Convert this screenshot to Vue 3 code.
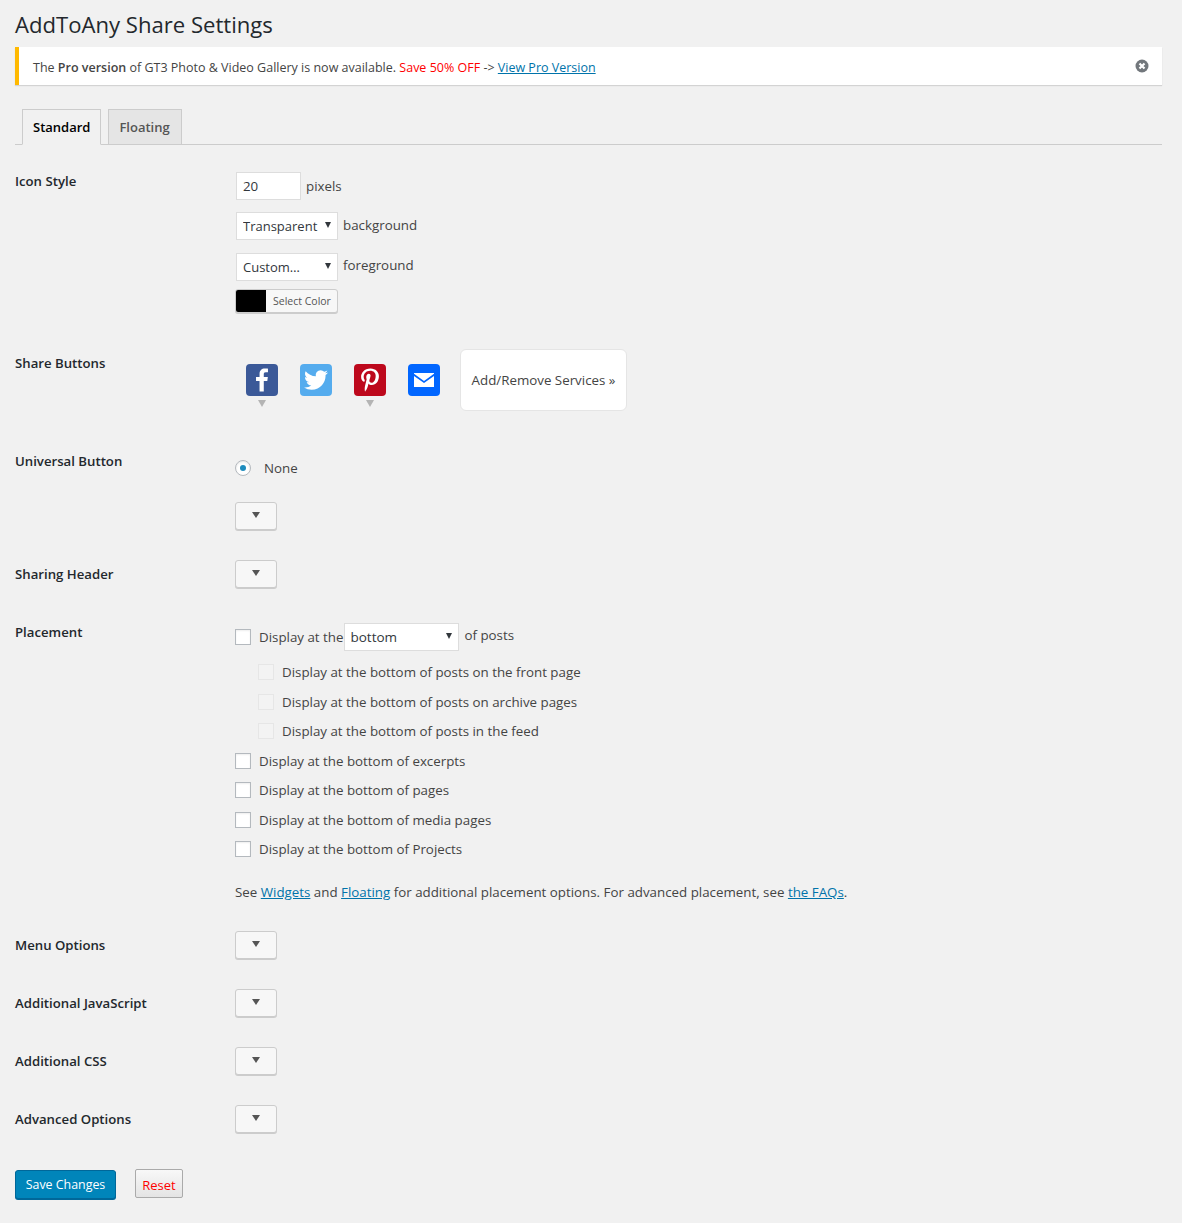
<script setup>
const sub = ['on the front page', 'on archive pages', 'in the feed']
const main = ['excerpts', 'pages', 'media pages', 'Projects']
const lower = ['Menu Options', 'Additional JavaScript', 'Additional CSS', 'Advanced Options']
</script>

<template>
  <div class="wrap">
    <h1 class="title">AddToAny Share Settings</h1>

    <div class="notice">
      <span>The <b>Pro version</b> of GT3 Photo &amp; Video Gallery is now available. <span class="red">Save 50% OFF</span> -&gt; <a href="#">View Pro Version</a></span>
      <svg class="dismiss" viewBox="0 0 14 14" width="14" height="14">
        <circle cx="7" cy="7" r="6.5" fill="#72777c" />
        <path d="M4.5 4.5l5 5M9.5 4.5l-5 5" stroke="#fff" stroke-width="2.2" />
      </svg>
    </div>

    <div class="tabs">
      <span class="tab active">Standard</span>
      <span class="tab floating">Floating</span>
    </div>

    <section class="row icon-style">
      <div class="label">Icon Style</div>
      <div class="field">
        <div class="line l-size"><input class="input" value="20" /><span>pixels</span></div>
        <div class="line l-bg">
          <span class="select s-small"><select><option>Transparent</option></select></span>
          <span class="raise">background</span>
        </div>
        <div class="line l-fg">
          <span class="select s-small"><select><option>Custom…</option></select></span>
          <span class="raise more-raise">foreground</span>
        </div>
        <div class="color">
          <span class="swatch"></span><span class="color-text">Select Color</span>
        </div>
      </div>
    </section>

    <section class="row share">
      <div class="label">Share Buttons</div>
      <div class="field share-field">
        <div class="svc">
          <svg viewBox="0 0 32 32" width="32" height="32"><rect width="32" height="32" rx="4" fill="#3b5998" /><path fill="#fff" d="M17.78 27.5V17.008h3.522l.527-4.09h-4.05v-2.61c0-1.182.33-1.99 2.023-1.99h2.166V4.66c-.375-.05-1.66-.16-3.155-.16-3.123 0-5.26 1.905-5.26 5.405v3.016h-3.53v4.09h3.53V27.5h4.223z" /></svg>
          <i class="caret"></i>
        </div>
        <div class="svc">
          <svg viewBox="0 0 32 32" width="32" height="32"><rect width="32" height="32" rx="4" fill="#55acee" /><path fill="#fff" d="M28 8.557a9.913 9.913 0 0 1-2.828.775 4.93 4.93 0 0 0 2.166-2.725 9.738 9.738 0 0 1-3.13 1.194 4.92 4.92 0 0 0-3.593-1.55 4.924 4.924 0 0 0-4.794 6.049c-4.09-.21-7.72-2.17-10.15-5.15a4.942 4.942 0 0 0-.665 2.477c0 1.71.87 3.214 2.19 4.1a4.968 4.968 0 0 1-2.23-.616v.06c0 2.39 1.7 4.38 3.952 4.83-.414.115-.85.174-1.297.174-.318 0-.626-.03-.928-.086a4.935 4.935 0 0 0 4.6 3.42 9.893 9.893 0 0 1-6.114 2.107c-.398 0-.79-.023-1.175-.068a13.953 13.953 0 0 0 7.55 2.213c9.056 0 14.01-7.507 14.01-14.013 0-.213-.005-.426-.015-.637.96-.695 1.795-1.56 2.455-2.55z" /></svg>
        </div>
        <div class="svc">
          <svg viewBox="0 0 32 32" width="32" height="32"><rect width="32" height="32" rx="4" fill="#bd081c" /><path fill="#fff" d="M16.539 4.5c-6.277 0-9.442 4.5-9.442 8.253 0 2.272.86 4.293 2.705 5.046.303.125.574.005.662-.33.061-.231.205-.816.27-1.06.088-.331.053-.447-.191-.736-.532-.627-.873-1.439-.873-2.591 0-3.338 2.498-6.327 6.505-6.327 3.548 0 5.497 2.168 5.497 5.062 0 3.81-1.686 7.025-4.188 7.025-1.382 0-2.416-1.142-2.085-2.545.397-1.674 1.166-3.48 1.166-4.689 0-1.081-.581-1.983-1.782-1.983-1.413 0-2.548 1.462-2.548 3.419 0 1.247.421 2.091.421 2.091l-1.699 7.199c-.505 2.137-.076 4.755-.039 5.019.021.158.223.196.314.077.13-.17 1.813-2.247 2.384-4.324.162-.587.929-3.631.929-3.631.46.876 1.801 1.646 3.227 1.646 4.247 0 7.128-3.871 7.128-9.053.003-3.918-3.317-7.568-8.361-7.568z" /></svg>
          <i class="caret"></i>
        </div>
        <div class="svc">
          <svg viewBox="0 0 32 32" width="32" height="32"><rect width="32" height="32" rx="4" fill="#0166ff" /><path fill="#fff" d="M6 9h20v.8L16 17 6 9.8zM6 12l10 7 10-7v11H6z" /></svg>
        </div>
        <div class="add">Add/Remove Services »</div>
      </div>
    </section>

    <section class="row universal">
      <div class="label">Universal Button</div>
      <div class="field">
        <div class="radio-line"><span class="radio"></span><span>None</span></div>
        <button class="more"><i></i></button>
      </div>
    </section>

    <section class="row header-row">
      <div class="label">Sharing Header</div>
      <div class="field"><button class="more"><i></i></button></div>
    </section>

    <section class="row placement">
      <div class="label">Placement</div>
      <div class="field">
        <div class="place-top">
          <span class="check"></span>
          <span class="at">Display at the</span>
          <span class="select s-wide"><select><option>bottom</option></select></span>
          <span class="raise of">of posts</span>
        </div>
        <div v-for="s in sub" :key="s" class="opt indent">
          <span class="check off"></span><span>Display at the bottom of posts {{ s }}</span>
        </div>
        <div v-for="m in main" :key="m" class="opt">
          <span class="check"></span><span>Display at the bottom of {{ m }}</span>
        </div>
        <p class="see">See <a href="#">Widgets</a> and <a href="#">Floating</a> for additional placement options. For advanced placement, see <a href="#">the FAQs</a>.</p>
      </div>
    </section>

    <section v-for="l in lower" :key="l" class="row lower">
      <div class="label">{{ l }}</div>
      <div class="field"><button class="more"><i></i></button></div>
    </section>

    <div class="actions">
      <button class="save">Save Changes</button>
      <button class="reset">Reset</button>
    </div>
  </div>
</template>

<style>
html, body { background: #f1f1f1; }
</style>

<style scoped>
.wrap {
  box-sizing: border-box;
  width: 1182px;
  height: 1223px;
  padding: 0 20px 0 15px;
  background: #f1f1f1;
  color: #444;
  font: 13.33px/20px "Open Sans", "Noto Sans", sans-serif;
  overflow: hidden;
}
a { color: #0073aa; text-decoration: underline; }
.title {
  margin: 0;
  padding-top: 9px;
  height: 47px;
  box-sizing: border-box;
  font-size: 22.1px;
  line-height: 30px;
  font-weight: 400;
  color: #23282d;
}
.notice {
  display: flex;
  justify-content: space-between;
  align-items: center;
  box-sizing: border-box;
  height: 38px;
  padding: 4px 13px 0 14px;
  background: #fff;
  border-left: 4px solid #ffb900;
  box-shadow: 0 1px 1px rgba(0, 0, 0, 0.12);
  color: #444;
  font-size: 12.5px;
}
.notice b { font-weight: 600; }
.red { color: #f00; }
.dismiss { margin-top: -4px; }
.tabs {
  display: flex;
  gap: 7px;
  box-sizing: border-box;
  height: 36px;
  margin-top: 24px;
  padding-left: 7px;
  border-bottom: 1px solid #ccc;
  font-size: 13px;
}
.tab {
  box-sizing: border-box;
  height: 36px;
  padding: 7px 10px;
  border: 1px solid #ccc;
  background: #e5e5e5;
  color: #555;
  font-weight: 600;
}
.tab.floating { width: 74px; }
.tab.active {
  background: #f1f1f1;
  border-bottom-color: #f1f1f1;
  color: #000;
}
.row {
  display: grid;
  grid-template-columns: 220px 1fr;
}
.label {
  color: #23282d;
  font-size: 13.2px;
  font-weight: 600;
}
.icon-style { margin-top: 26px; }
.icon-style .field { margin-top: 1px; }
.line { display: flex; align-items: flex-start; gap: 5px; }
.line span:not(.select) { line-height: 28px; }
.raise { margin-top: -1px; }
.more-raise { margin-top: -2px; }
.input {
  box-sizing: border-box;
  width: 65px;
  height: 28px;
  margin: 0 0 0 1px;
  padding: 0 6px;
  border: 1px solid #ddd;
  background: #fff;
  color: #32373c;
  font: inherit;
  outline: 0;
}
.l-bg { margin-top: 12px; }
.l-fg { margin-top: 13px; }
.select {
  position: relative;
  display: inline-block;
  box-sizing: border-box;
  height: 28px;
  border: 1px solid #ddd;
  background: #fff;
}
.select::after {
  content: "";
  position: absolute;
  right: 6px;
  top: 9px;
  border-style: solid;
  border-width: 6px 3.5px 0;
  border-color: #32373c transparent transparent;
}
.select select {
  appearance: none;
  display: block;
  width: 100%;
  height: 26px;
  padding: 0 6px;
  border: 0;
  background: transparent;
  color: #32373c;
  font: inherit;
  outline: 0;
}
.s-small { width: 102px; margin-left: 1px; font-size: 13px; }
.s-wide { width: 115px; font-size: 13.5px; }
.s-wide select { padding: 0 5px; }
.color {
  display: flex;
  box-sizing: border-box;
  width: 103px;
  height: 24px;
  margin-top: 8px;
  border: 1px solid #ccc;
  border-radius: 3px;
  box-shadow: 0 1px 0 #ccc;
  background: #f7f7f7;
  overflow: hidden;
}
.swatch { width: 30px; background: #000; }
.color-text {
  padding-left: 7px;
  color: #555;
  font-size: 10.5px;
  line-height: 22px;
}
.share { margin-top: 36px; height: 62px; }
.share .label { margin-top: 4px; }
.share-field {
  display: flex;
  align-items: flex-start;
  gap: 22px;
  padding-left: 11px;
}
.svc { position: relative; width: 32px; height: 32px; margin-top: 15px; }
.svc svg { display: block; }
.caret {
  position: absolute;
  left: 12px;
  top: 36px;
  border-style: solid;
  border-width: 7px 4px 0;
  border-color: #b4b4b4 transparent transparent;
}
.add {
  box-sizing: border-box;
  width: 167px;
  height: 62px;
  margin-left: -2px;
  border: 1px solid #e5e5e5;
  border-radius: 6px;
  background: #fff;
  color: #444;
  text-align: center;
  line-height: 60px;
}
.universal { margin-top: 40px; }
.radio-line {
  display: flex;
  align-items: center;
  gap: 13px;
  height: 20px;
  margin-top: 7px;
}
.radio {
  position: relative;
  box-sizing: border-box;
  width: 16px;
  height: 16px;
  border: 1px solid #b4b9be;
  border-radius: 50%;
  background: #fff;
  box-shadow: inset 0 1px 2px rgba(0, 0, 0, 0.1);
}
.radio::after {
  content: "";
  position: absolute;
  left: 4px;
  top: 4px;
  width: 6px;
  height: 6px;
  border-radius: 50%;
  background: #1e8cbe;
}
.more {
  display: flex;
  align-items: center;
  justify-content: center;
  box-sizing: border-box;
  width: 42px;
  height: 28px;
  padding: 0;
  border: 1px solid #ccc;
  border-radius: 3px;
  background: #f7f7f7;
  box-shadow: 0 1px 0 #ccc;
}
.more i {
  margin-top: -2px;
  border-style: solid;
  border-width: 6px 4px 0;
  border-color: #555 transparent transparent;
}
.universal .more { margin-top: 24px; }
.header-row { margin-top: 30px; }
.header-row .label, .lower .label { margin-top: 4px; }
.placement { margin-top: 35px; }
.placement .label { margin-top: -1px; }
.place-top {
  display: flex;
  align-items: center;
  height: 28px;
}
.check {
  flex: none;
  box-sizing: border-box;
  width: 16px;
  height: 16px;
  border: 1px solid #b4b9be;
  background: #fff;
  box-shadow: inset 0 1px 2px rgba(0, 0, 0, 0.07);
}
.check.off { border-color: #e6e6e6; background: #f3f3f3; box-shadow: none; }
.at { margin-left: 8px; }
.place-top .s-wide { margin-left: 1px; }
.of { margin-left: 5px; margin-top: -5px; }
.opt {
  display: flex;
  align-items: center;
  gap: 8px;
  height: 20px;
  margin-top: 9.5px;
}
.place-top + .opt { margin-top: 11px; }
.indent { padding-left: 23px; }
.see { margin: 23px 0 0; }
.lower { margin-top: 30px; }
.placement + .lower { margin-top: 29px; }
.actions {
  display: flex;
  align-items: flex-start;
  gap: 19px;
  margin-top: 36px;
}
.save {
  box-sizing: border-box;
  width: 101px;
  height: 29px;
  margin-top: 1px;
  padding: 0;
  border: 1px solid #006799;
  border-radius: 3px;
  background: #0085ba;
  box-shadow: 0 1px 0 #006799;
  color: #fff;
  font: inherit;
  font-size: 12.4px;
}
.reset {
  box-sizing: border-box;
  width: 48px;
  height: 29px;
  padding: 2px 0 0;
  border: 1px solid #aaa;
  border-radius: 2px;
  background: linear-gradient(#f8f8f8, #e4e4e4);
  color: #f00;
  font: inherit;
  font-size: 13px;
}
</style>
